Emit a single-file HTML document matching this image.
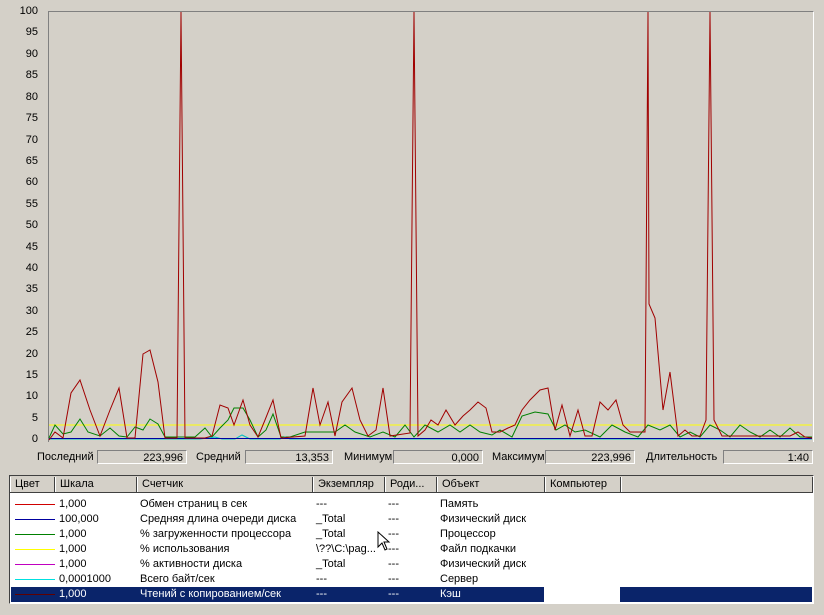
<!DOCTYPE html><html><head><meta charset="utf-8"><style>
body{margin:0;width:824px;height:615px;background:#d4d0c8;font-family:"Liberation Sans","DejaVu Sans",sans-serif;font-size:11px;color:#000;position:relative;overflow:hidden}
.a{position:absolute;white-space:nowrap}
.yl{position:absolute;right:786px;text-align:right;width:30px}
.box{position:absolute;top:450px;height:14px;border-top:1px solid #808080;border-left:1px solid #808080;border-bottom:1px solid #fff;border-right:1px solid #fff;text-align:right;line-height:14px;padding-right:3px;box-sizing:border-box}
.hd{position:absolute;top:477px;height:15px;line-height:15px;border-right:1px solid #404040;border-left:1px solid #fff;box-sizing:border-box;padding-left:4px;background:#d4d0c8}
.row{position:absolute;left:11px;width:801px;height:15px;line-height:15px}
.row span{position:absolute}
.ln{position:absolute;left:4px;top:7px;width:40px;height:1px}
</style></head><body>
<div style="position:absolute;left:48px;top:11px;width:764px;height:430px;border-top:1px solid #808080;border-left:1px solid #808080;border-right:1px solid #fff"></div>
<div class="yl" style="top:5px">100</div><div class="yl" style="top:26px">95</div><div class="yl" style="top:48px">90</div><div class="yl" style="top:69px">85</div><div class="yl" style="top:91px">80</div><div class="yl" style="top:112px">75</div><div class="yl" style="top:134px">70</div><div class="yl" style="top:155px">65</div><div class="yl" style="top:176px">60</div><div class="yl" style="top:198px">55</div><div class="yl" style="top:219px">50</div><div class="yl" style="top:241px">45</div><div class="yl" style="top:262px">40</div><div class="yl" style="top:283px">35</div><div class="yl" style="top:305px">30</div><div class="yl" style="top:326px">25</div><div class="yl" style="top:348px">20</div><div class="yl" style="top:369px">15</div><div class="yl" style="top:390px">10</div><div class="yl" style="top:412px">5</div><div class="yl" style="top:433px">0</div>
<svg width="824" height="615" style="position:absolute;left:0;top:0" fill="none">
<line x1="49" y1="425" x2="812" y2="425" stroke="#ffff00"/>
<polyline stroke="#008000" points="49,438 55,425 63,434 71,432 80,419 88,432 100,436 110,428 119,436 127,437 135,427 143,430 150,419 158,424 165,437 180,437 195,437 205,428 212,437 220,428 228,420 234,408 243,408 250,420 258,437 266,430 273,414 281,437 290,437 305,432 320,432 335,432 345,425 355,432 370,437 383,432 395,437 405,425 414,437 425,425 438,432 450,425 460,432 470,425 480,432 492,435 500,430 512,437 522,416 535,412 548,414 556,430 565,425 575,432 585,430 600,437 612,425 625,432 638,437 648,425 660,430 670,425 680,437 690,432 700,437 710,425 720,430 730,437 740,425 750,432 760,437 770,430 780,437 790,428 800,437 812,437"/>
<polyline stroke="#00c0c0" points="49,439 200,439 215,437 222,439 235,439 242,435 250,439 280,439 285,437 290,439 812,439"/>
<line x1="49" y1="438.5" x2="812" y2="438.5" stroke="#0000a0"/>
<polyline stroke="#a00000" points="49,440 55,432 63,438 71,393 80,380 90,410 100,436 110,410 119,388 127,438 135,438 143,354 150,350 158,382 165,438 177,438 181,12 185,438 205,438 212,436 220,405 228,408 234,425 243,400 250,425 258,437 265,420 273,400 281,438 305,436 313,388 320,425 328,402 335,436 342,402 352,388 360,420 368,436 376,430 383,388 390,436 410,433 414,12 418,436 425,430 431,420 438,425 446,410 455,425 463,416 470,410 478,402 486,408 492,432 500,432 508,428 515,425 522,410 530,400 540,390 548,388 555,430 562,405 570,436 578,410 585,436 592,436 600,402 608,410 616,400 623,425 630,432 645,432 648,12 649,304 655,318 663,410 670,372 678,436 685,430 692,436 700,436 706,420 710,12 714,420 722,436 790,436 798,432 805,437 812,438"/>
</svg>
<div class="a" style="left:37px;top:451px">Последний</div><div class="box" style="left:97px;width:90px">223,996</div>
<div class="a" style="left:196px;top:451px">Средний</div><div class="box" style="left:245px;width:88px">13,353</div>
<div class="a" style="left:344px;top:451px">Минимум</div><div class="box" style="left:393px;width:90px">0,000</div>
<div class="a" style="left:492px;top:451px">Максимум</div><div class="box" style="left:545px;width:90px">223,996</div>
<div class="a" style="left:646px;top:451px">Длительность</div><div class="box" style="left:723px;width:90px">1:40</div>
<div style="position:absolute;left:9px;top:475px;width:805px;height:129px;border:1px solid #404040;border-right-color:#fff;border-bottom-color:#fff;background:#fff;box-sizing:border-box"></div>
<div style="position:absolute;left:10px;top:476px;width:803px;height:17px;background:#d4d0c8;border-bottom:1px solid #404040;box-sizing:border-box"></div>
<div class="hd" style="left:10px;width:45px">Цвет</div><div class="hd" style="left:55px;width:82px">Шкала</div><div class="hd" style="left:137px;width:176px">Счетчик</div><div class="hd" style="left:313px;width:72px">Экземпляр</div><div class="hd" style="left:385px;width:52px">Роди...</div><div class="hd" style="left:437px;width:108px">Объект</div><div class="hd" style="left:545px;width:76px">Компьютер</div><div class="hd" style="left:621px;width:192px"></div>
<div class="row" style="top:497px"><i class="ln" style="background:#d00000"></i><span style="left:48px">1,000</span><span style="left:129px">Обмен страниц в сек</span><span style="left:305px">---</span><span style="left:377px">---</span><span style="left:429px">Память</span></div>
<div class="row" style="top:512px"><i class="ln" style="background:#0000a0"></i><span style="left:48px">100,000</span><span style="left:129px">Средняя длина очереди диска</span><span style="left:305px">_Total</span><span style="left:377px">---</span><span style="left:429px">Физический диск</span></div>
<div class="row" style="top:527px"><i class="ln" style="background:#008000"></i><span style="left:48px">1,000</span><span style="left:129px">% загруженности процессора</span><span style="left:305px">_Total</span><span style="left:377px">---</span><span style="left:429px">Процессор</span></div>
<div class="row" style="top:542px"><i class="ln" style="background:#ffff00"></i><span style="left:48px">1,000</span><span style="left:129px">% использования</span><span style="left:305px">\??\C:\pag...</span><span style="left:377px">---</span><span style="left:429px">Файл подкачки</span></div>
<div class="row" style="top:557px"><i class="ln" style="background:#c000c0"></i><span style="left:48px">1,000</span><span style="left:129px">% активности диска</span><span style="left:305px">_Total</span><span style="left:377px">---</span><span style="left:429px">Физический диск</span></div>
<div class="row" style="top:572px"><i class="ln" style="background:#00e0e0"></i><span style="left:48px">0,0001000</span><span style="left:129px">Всего байт/сек</span><span style="left:305px">---</span><span style="left:377px">---</span><span style="left:429px">Сервер</span></div>
<div class="row" style="top:587px;background:#0a246a;color:#fff"><i class="ln" style="background:#600000"></i><span style="left:48px">1,000</span><span style="left:129px">Чтений с копированием/сек</span><span style="left:305px">---</span><span style="left:377px">---</span><span style="left:429px">Кэш</span><span style="left:533px;width:76px;height:15px;background:#fff"></span></div>
<svg width="14" height="22" style="position:absolute;left:377px;top:531px"><path d="M1,1 L1,16 L5,12 L8,19 L10,18 L7,11 L12,11 Z" fill="#fff" stroke="#000"/></svg>
</body></html>
